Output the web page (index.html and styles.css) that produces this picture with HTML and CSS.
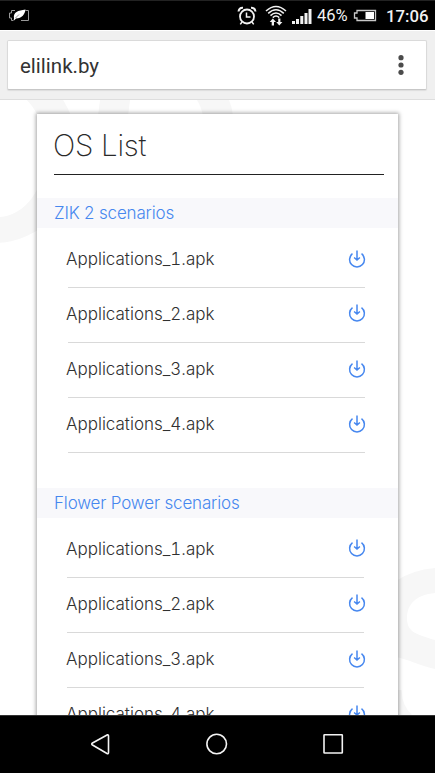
FILE: index.html
```
<!DOCTYPE html>
<html lang="en">
<head>
<meta charset="utf-8">
<title>OS List</title>
<link rel="stylesheet" href="styles.css">
</head>
<body>
<svg class="defs" width="0" height="0" aria-hidden="true">
  <symbol id="download" viewBox="0 0 18 19">
    <path d="M4.500 3.700A7.400 7.400 0 1 0 13.500 3.700M9 .5V9.500M6.100 7.500L9 10 11.900 7.500" fill="none" stroke="#4687ef" stroke-width="1.500"/>
  </symbol>
</svg>
<div class="phone">
  <header class="status">
    <svg class="leaf" width="22" height="13" viewBox="0 0 22 13" fill="none">
      <path d="M7 1.500H3.500V4H1.500V9H3.500V11.500H5M17.500 1.500H20.500V11.500H13" stroke="#999" stroke-width="1"/>
      <path d="M6 9.500C5 3 10 1.500 17.500 .5C17 5 14 9.500 8 9.500L5.500 12Z" fill="#fff"/>
      <path d="M7.500 9L11 5.500" stroke="#444" stroke-width=".6"/>
    </svg>
    <svg class="alarm" width="20" height="20" viewBox="0 0 20 20" fill="none" stroke="#f2f2f2">
      <circle cx="10" cy="10.500" r="7" stroke-width="1.800"/>
      <path d="M1.500 5.500Q2 1.500 6 1.700M18.500 5.500Q18 1.500 14 1.700" stroke-width="2"/>
      <path d="M9.500 6.500V11H13.500M5 16L3.300 18.400M15 16L16.700 18.400" stroke-width="1.500"/>
    </svg>
    <svg class="wifi" width="22" height="22" viewBox="0 0 22 22" fill="none" stroke="#f2f2f2" stroke-width="1.500">
      <path d="M1 6Q11-3 21 6M3.200 8.400Q11 1 18.800 8.400M5.500 10.600Q11 5.300 16.500 10.600M7.800 12.600Q11 9.500 14.200 12.600"/>
      <path d="M7.800 14L11 17.500H9V21H6.700V17.500H4.700ZM13.200 14H15.400V17.500H17.400L14.300 21 11.200 17.500H13.200Z" transform="translate(0 -.5)" fill="#f2f2f2" stroke="none"/>
    </svg>
    <svg class="signal" width="20" height="15" viewBox="0 0 20 15" fill="#f2f2f2">
      <path d="M0 12h3v3H0zM4 10h3v5H4zM8.300 7h3v8h-3zM12.500 4h3v11h-3zM16.500 0h3v15h-3z"/>
    </svg>
    <span class="percent">46%</span>
    <svg class="battery" width="24" height="13" viewBox="0 0 24 13">
      <path d="M4 1.500H22.500V11.500H4V9H1.500V4H4Z" fill="none" stroke="#c8c8c8" stroke-width="1.300"/>
      <path d="M12.500 3H21V10H12.500Z" fill="#fff"/>
    </svg>
    <span class="clock">17:06</span>
  </header>
  <div class="toolbar">
    <div class="address">
      <span class="url">elilink.by</span>
      <svg width="6" height="22" viewBox="0 0 6 22" fill="#4b4b4b"><circle cx="3" cy="3.700" r="2.600"/><circle cx="3" cy="11" r="2.600"/><circle cx="3" cy="18.300" r="2.600"/></svg>
    </div>
  </div>
  <main class="page">
    <svg class="pattern" width="435" height="615" viewBox="0 100 435 615" fill="#f7f7f7">
      <path fill-rule="evenodd" d="M-88 152A83 91 0 1 1 78 152A83 91 0 1 1-88 152ZM-50 152A48 65 0 1 0 46 152A48 65 0 1 0-50 152Z"/>
      <path d="M100 100H130L128 116H98ZM197 100H229Q232 107 233 116H203Q201 106 197 100Z"/>
      <path d="M396 581Q412 570 435 568V593C416 595 407 604 407 618C407 631 414 634 435 640V669C418 665 407 659 396 657ZM396 690H401.500Q402 706 412 715H396Z"/>
    </svg>
    <section class="card">
      <h1>OS List</h1>
      <h2>ZIK 2 scenarios</h2>
      <ul class="files">
        <li><span>Applications_1.apk</span><svg><use href="#download"/></svg></li>
        <li class="raised"><span>Applications_2.apk</span><svg><use href="#download"/></svg></li>
        <li><span>Applications_3.apk</span><svg><use href="#download"/></svg></li>
        <li><span>Applications_4.apk</span><svg><use href="#download"/></svg></li>
      </ul>
      <h2>Flower Power scenarios</h2>
      <ul class="files second">
        <li><span>Applications_1.apk</span><svg><use href="#download"/></svg></li>
        <li><span>Applications_2.apk</span><svg><use href="#download"/></svg></li>
        <li><span>Applications_3.apk</span><svg><use href="#download"/></svg></li>
        <li><span>Applications_4.apk</span><svg><use href="#download"/></svg></li>
      </ul>
    </section>
  </main>
  <nav class="keys">
    <svg width="435" height="57" viewBox="0 0 435 57" fill="none" stroke="#f3f3f3" stroke-width="1.600" stroke-linejoin="round">
      <path d="M107.500 18.800Q108.500 18.500 108.500 20V36.500Q108.500 38.300 107 37.500L92.500 29Q91 28 92.500 27Z"/>
      <circle cx="216.700" cy="28" r="9.800"/>
      <rect x="324" y="18.700" width="18.300" height="18.300" rx=".5"/>
    </svg>
  </nav>
</div>
</body>
</html>
```
FILE: styles.css
```
* { box-sizing: border-box; }
body { margin: 0; }
.defs { position: absolute; }
.phone {
  width: 435px;
  height: 773px;
  display: flex;
  flex-direction: column;
  overflow: hidden;
  background: #fff;
  font-family: Inter, "Liberation Sans", sans-serif;
}
.phone svg { flex: none; display: block; }
.status {
  height: 30px;
  flex: none;
  display: flex;
  align-items: center;
  padding: 0 5px 0 8px;
  background: #000;
  border-top: 1px solid #222;
  color: #f2f2f2;
  font: 500 17px/30px Roboto, sans-serif;
}
.leaf { margin-top: -1px; }
.alarm { margin-left: 207px; }
.wifi { margin-left: 8px; }
.signal { margin-left: 5px; margin-top: 2px; }
.percent { width: 33px; margin-left: 5px; font-size: 16.5px; font-weight: 400; white-space: nowrap; }
.battery { margin-left: 3px; }
.clock { width: 43px; margin-left: 9px; font-size: 16.8px; white-space: nowrap; }
.toolbar {
  height: 70px;
  flex: none;
  padding: 9px 8px 9px 7px;
  background: #f0f0f0;
  border-top: 1px solid #fff;
  border-bottom: 1px solid #dedede;
}
.address {
  height: 50px;
  display: flex;
  align-items: center;
  justify-content: space-between;
  padding: 0 22px 0 12px;
  background: #fff;
  border: 1px solid #dadada;
  border-bottom-color: #c7c7c7;
  border-radius: 2px;
  box-shadow: 0 1px 1px #ddd;
}
.url { color: #333; font: 400 20.5px/28px Roboto, sans-serif; padding-top: 1px; }
.page { position: relative; flex: 1; min-height: 0; overflow: hidden; padding: 14px 37px 0; }
.pattern { position: absolute; left: 0; top: 0; }
.card {
  position: relative;
  width: 361px;
  height: 640px;
  background: #fff;
  box-shadow: 0 0 4px 1px rgba(0,0,0,.36);
}
h1 {
  width: 330px;
  height: 61px;
  margin: 0 0 23px 17px;
  border-bottom: 1px solid #222;
  color: #292929;
  font-size: 29.5px;
  font-weight: 200;
  letter-spacing: -.25px;
  line-height: 63px;
  text-indent: -1px;
}
h2 {
  height: 30px;
  margin: 0;
  padding-left: 17px;
  background: #f8f8fb;
  color: #4687ef;
  font-size: 17px;
  font-weight: 300;
  line-height: 30px;
  letter-spacing: -.17px;
}
.files { list-style: none; margin: 0 0 35px; padding: 5px 33px 0 31px; }
.files li {
  height: 55px;
  display: flex;
  align-items: center;
  justify-content: space-between;
  padding-bottom: 2px;
  border-bottom: 1px solid #d9d9d9;
  color: #303030;
  font-size: 17px;
  font-weight: 300;
  letter-spacing: 0;
  font-feature-settings: "tnum";
}
.files span { margin-left: -2px; }
.files li svg { width: 18px; height: 19px; margin-right: -1px; }
.files .raised svg { margin-top: -2px; }
.second { padding: 5px 34px 0 30px; }
.second span { margin-left: -1px; }
.second li svg { margin-right: -2px; }
.second li:first-child svg, .second li:nth-child(2) svg { margin-top: -1px; }
.keys { height: 58px; flex: none; background: #000; border-top: 1px solid #333; }
```
